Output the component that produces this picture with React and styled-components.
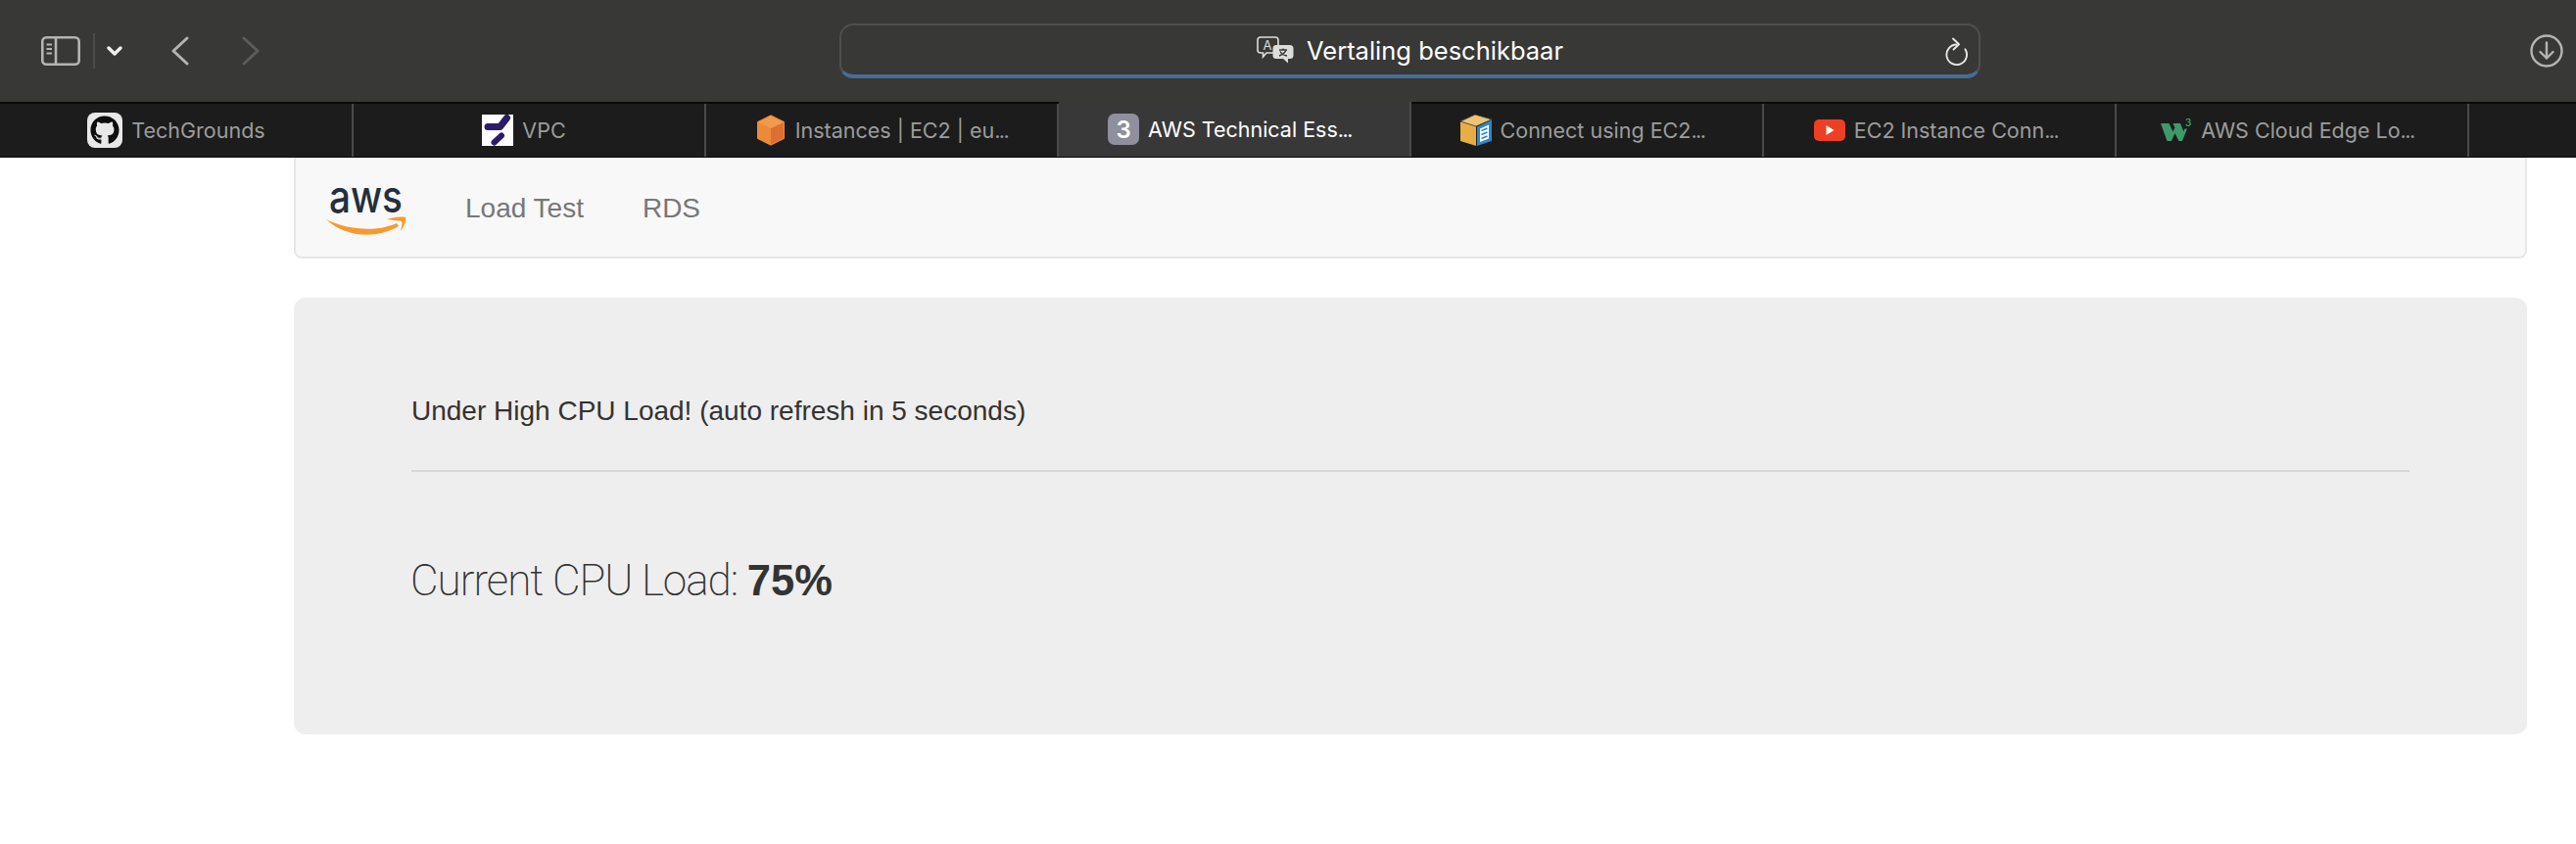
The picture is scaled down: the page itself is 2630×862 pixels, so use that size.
import React from "react"
import styled, { createGlobalStyle } from "styled-components"
import { FaGithub } from "react-icons/fa"

const GlobalStyle = createGlobalStyle`
  html, body {
    margin: 0;
    background: #fff;
    font-family: "Liberation Sans", Arial, sans-serif;
    overflow: hidden;
  }
`

const Window = styled.div`
  width: 2630px;
  height: 862px;
  display: flex;
  flex-direction: column;
`

const Toolbar = styled.header`
  height: 104px;
  flex: none;
  display: grid;
  grid-template-columns: 857px 1165px 1fr;
  background: #383836;
  align-items: center;
`

const ToolGroup = styled.div`
  display: flex;
  align-items: center;
  padding-left: 42px;
`

const Divider = styled.span`
  width: 2px;
  height: 36px;
  background: #4c4c4a;
  margin: 0 12px 0 13px;
`

const ToolButton = styled.span`
  display: flex;
  margin-left: ${props => props.offset || 0}px;
`

const AddressBar = styled.div`
  position: relative;
  height: 56px;
  box-sizing: border-box;
  border: 2px solid #4f4f4d;
  border-bottom: 4px solid #476c96;
  border-radius: 14px;
  display: flex;
  align-items: center;
  justify-content: center;
  gap: 13px;
  color: #fff;
  font-family: Inter, sans-serif;
  font-size: 25.5px;
`

const ReloadSlot = styled.span`
  position: absolute;
  right: 10px;
  top: 12px;
  display: flex;
`

const DownloadSlot = styled.div`
  display: flex;
  justify-content: flex-end;
  padding-right: 13px;
`

const TabStrip = styled.nav`
  height: 57px;
  flex: none;
  box-sizing: border-box;
  display: flex;
  padding-left: 1px;
  background: #1c1c1c;
  border-top: 2px solid #0a0a0a;
  border-bottom: 1px solid #0a0a0a;
`

const Tab = styled.div`
  width: 360px;
  flex: none;
  box-sizing: border-box;
  display: flex;
  align-items: center;
  justify-content: center;
  gap: 9px;
  padding-right: ${props => props.shift || 0}px;
  border-right: 2px solid #4a4a4a;
  background: ${props => (props.active ? "#383838" : "transparent")};
  color: ${props => (props.active ? "#fff" : "#9c9c9c")};
  font-family: Inter, sans-serif;
  font-size: 21.5px;
  white-space: nowrap;
  margin-top: ${props => (props.active ? "-2px" : "0")};
`

const Dots = styled.span`
  letter-spacing: -1.5px;
`

const Badge = styled.span`
  width: 32px;
  height: 32px;
  border-radius: 7px;
  background: #8f8f9d;
  color: #fff;
  font-size: 24px;
  font-weight: 600;
  display: flex;
  align-items: center;
  justify-content: center;
`

const GithubIcon = styled.span`
  width: 36px;
  height: 36px;
  border-radius: 8px;
  background: #e8e8e8;
  color: #0d0d0d;
  display: flex;
  align-items: center;
  justify-content: center;
`

const Page = styled.main`
  flex: 1;
  padding: 0 50px 0 300px;
`

const Navbar = styled.div`
  height: 103px;
  box-sizing: border-box;
  display: flex;
  align-items: center;
  gap: 60px;
  padding: 0 31px;
  background: #f8f8f8;
  border: 2px solid #e7e7e7;
  border-top-width: 1px;
  border-radius: 0 0 8px 8px;
  margin-bottom: 40px;
`

const Logo = styled.svg`
  margin-top: 8px;
`

const NavLink = styled.a`
  color: #777;
  font-size: 28px;
  line-height: 40px;
  margin-top: 2px;
`

const Jumbotron = styled.section`
  height: 446px;
  box-sizing: border-box;
  padding: 96px 120px 0;
  background: #eee;
  border-radius: 12px;
  color: #333;
`

const Status = styled.p`
  margin: 0;
  font-size: 28px;
  line-height: 40px;
`

const Rule = styled.hr`
  height: 2px;
  border: 0;
  margin: 40px 0 0;
  background: #d7d7d7;
`

const Load = styled.h2`
  margin: 79px 0 0 -1px;
  font-family: Roboto, sans-serif;
  font-weight: 200;
  font-size: 44px;
  line-height: 64px;
  letter-spacing: -1px;
`

const LoadValue = styled.b`
  font-family: "Liberation Sans", Arial, sans-serif;
  font-size: 43.5px;
  font-weight: 700;
  letter-spacing: 0;
`

const SidebarIcon = () => (
  <svg width="40" height="30" viewBox="0 0 40 30" fill="none" stroke="#b4b4b2" strokeWidth="2.6">
    <rect x="1.3" y="1.3" width="37.4" height="27.4" rx="4" />
    <path d="M15 1.3v27.4" />
    <path d="M5.5 8.5h5.5M5.5 13h5.5M5.5 17.5h5.5" strokeWidth="2" />
  </svg>
)

const Chevron = ({ d, color, w, h, weight }) => (
  <svg width={w} height={h} viewBox={`0 0 ${w} ${h}`} fill="none" stroke={color} strokeWidth={weight} strokeLinecap="round" strokeLinejoin="round">
    <path d={d} />
  </svg>
)

const TranslateIcon = () => (
  <svg width="38" height="28" viewBox="0 0 38 28">
    <path
      d="M4 1h15a3 3 0 0 1 3 3v10a3 3 0 0 1-3 3H10l-3.500 4v-4H4a3 3 0 0 1-3-3V4a3 3 0 0 1 3-3z"
      fill="none"
      stroke="#dcdcdc"
      strokeWidth="1.6"
    />
    <text x="6.500" y="14" fontFamily="Inter, sans-serif" fontSize="13" fill="#dcdcdc">A</text>
    <path
      d="M20 9h14a3.500 3.500 0 0 1 3.500 3.500v7a3.500 3.500 0 0 1-3.500 3.500h-2v4.500l-5-4.500h-7a3.500 3.500 0 0 1-3.500-3.500v-7A3.500 3.500 0 0 1 20 9z"
      fill="#dcdcdc"
    />
    <path d="M23 14h8M27 12.500v1.500M30 14c-1 3-4 5-7 6M24 15.500c1 2 4 4 7 4.500" fill="none" stroke="#383836" strokeWidth="1.5" />
  </svg>
)

const ReloadIcon = () => (
  <svg width="24" height="30" viewBox="0 0 24 30" fill="none" stroke="#e6e6e6" strokeWidth="1.9" strokeLinecap="round" strokeLinejoin="round">
    <path d="M11.500 7.500A10.300 10.300 0 1 0 20.400 12.300" />
    <path d="M8 1.500l6 5.800-5.500 5.200" />
  </svg>
)

const DownloadIcon = () => (
  <svg width="34" height="34" viewBox="0 0 34 34" fill="none" stroke="#b4b4b2" strokeWidth="2.4" strokeLinecap="round" strokeLinejoin="round">
    <circle cx="17" cy="17" r="15.500" />
    <path d="M17 8.500v16M10.500 18l6.500 6.500 6.500-6.500" />
  </svg>
)

const VpcIcon = () => (
  <svg width="32" height="32" viewBox="0 0 32 32" fill="none" stroke="#2c1b66" strokeLinecap="round" strokeLinejoin="round">
    <rect width="32" height="32" fill="#fff" stroke="none" />
    <path d="M6 12.500H18.500L25.500 3.500" strokeWidth="7" />
    <path d="M12.500 28.500L20 21.500" strokeWidth="6" />
  </svg>
)

const CubeIcon = () => (
  <svg width="32" height="32" viewBox="0 0 32 32" strokeLinejoin="round">
    <path d="M16 1.500l13 6.500v16l-13 6.500-13-6.500V8z" fill="#ec8a38" stroke="#ec8a38" strokeWidth="2" />
    <path d="M16 14l13-6v16l-13 6.500z" fill="#dd6f30" />
    <path d="M16 1.500l13 6.500-13 6-13-6z" fill="#f09a4e" />
  </svg>
)

const BoxIcon = () => (
  <svg width="32" height="32" viewBox="0 0 32 32">
    <path d="M0 7l16 5v20L0 27z" fill="#e8ad45" />
    <path d="M0 7l15-7 17 5-16 7z" fill="#f0c470" stroke="#2c3e55" strokeWidth="0.8" />
    <path d="M17 12.500l15-7V27l-15 5z" fill="#2f86c8" />
    <path d="M20 14.500l9-4v14l-9 3.500z" fill="#fff" />
    <path d="M21.500 16.500l6-2.500M21.500 20.500l6-2.500M21.500 24.500l6-2.500" stroke="#2f86c8" strokeWidth="1.800" />
  </svg>
)

const YoutubeIcon = () => (
  <svg width="32" height="22" viewBox="0 0 32 22">
    <rect width="32" height="22" rx="5" fill="#ee3f24" />
    <path d="M12.500 6l8 5-8 5z" fill="#fff" />
  </svg>
)

const W3Icon = () => (
  <svg width="32" height="26" viewBox="0 0 32 26">
    <path d="M0 6h8.500l4 8.500 2-4-2-4.500h7.500l3.500 8.500 1-3h2.500l-5 12.500h-3.500l-4-8-3.500 8H6.500z" fill="#3f9a69" />
    <text x="25" y="9" fontFamily="Inter, sans-serif" fontWeight="600" fontSize="10" fill="#3f9a69">3</text>
  </svg>
)

const AwsLogo = () => (
  <Logo width="82" height="50" viewBox="0 0 82 50">
    <text x="3" y="26" fontFamily="Inter, sans-serif" fontWeight="500" fontSize="45" textLength="75" lengthAdjust="spacingAndGlyphs" fill="#232f3e">aws</text>
    <path d="M0 33C20 43 50 47 72 37L74 40C52 53 20 52 0 33Z" fill="#f79a2e" />
    <path d="M62 33C68 31 76 30 81 31C82 35 79 41 76 45C77 40 78 37 77 35C73 34 67 34 62 33Z" fill="#f79a2e" />
  </Logo>
)

const tabs = [
  { title: "TechGrounds", icon: <GithubIcon><FaGithub size={30} /></GithubIcon> },
  { title: "VPC", icon: <VpcIcon />, shift: 10 },
  { title: "Instances | EC2 | eu", cut: true, icon: <CubeIcon /> },
  { title: "AWS Technical Ess", cut: true, icon: <Badge>3</Badge>, active: true, shift: 9 },
  { title: "Connect using EC2", cut: true, icon: <BoxIcon />, shift: 9 },
  { title: "EC2 Instance Conn", cut: true, icon: <YoutubeIcon />, shift: 7 },
  { title: "AWS Cloud Edge Lo", cut: true, icon: <W3Icon />, shift: 9 },
]

export default function App() {
  return (
    <Window>
      <GlobalStyle />
      <Toolbar>
        <ToolGroup>
          <SidebarIcon />
          <Divider />
          <ToolButton>
            <Chevron w={16} h={11} color="#f0f0f0" weight={3.4} d="M2 2l6 6 6-6" />
          </ToolButton>
          <ToolButton offset={50}>
            <Chevron w={18} h={30} color="#b4b4b2" weight={3} d="M16 2L2 15l14 13" />
          </ToolButton>
          <ToolButton offset={54}>
            <Chevron w={18} h={30} color="#5c5c5a" weight={3} d="M2 2l14 13L2 28" />
          </ToolButton>
        </ToolGroup>
        <AddressBar>
          <TranslateIcon />
          Vertaling beschikbaar
          <ReloadSlot><ReloadIcon /></ReloadSlot>
        </AddressBar>
        <DownloadSlot><DownloadIcon /></DownloadSlot>
      </Toolbar>
      <TabStrip>
        {tabs.map(tab => (
          <Tab key={tab.title} active={tab.active} shift={tab.shift}>
            {tab.icon}
            <span>
              {tab.title}
              {tab.cut && <Dots>...</Dots>}
            </span>
          </Tab>
        ))}
      </TabStrip>
      <Page>
        <Navbar>
          <AwsLogo />
          <NavLink>Load Test</NavLink>
          <NavLink>RDS</NavLink>
        </Navbar>
        <Jumbotron>
          <Status>Under High CPU Load! (auto refresh in 5 seconds)</Status>
          <Rule />
          <Load>
            Current CPU Load: <LoadValue>75%</LoadValue>
          </Load>
        </Jumbotron>
      </Page>
    </Window>
  )
}
